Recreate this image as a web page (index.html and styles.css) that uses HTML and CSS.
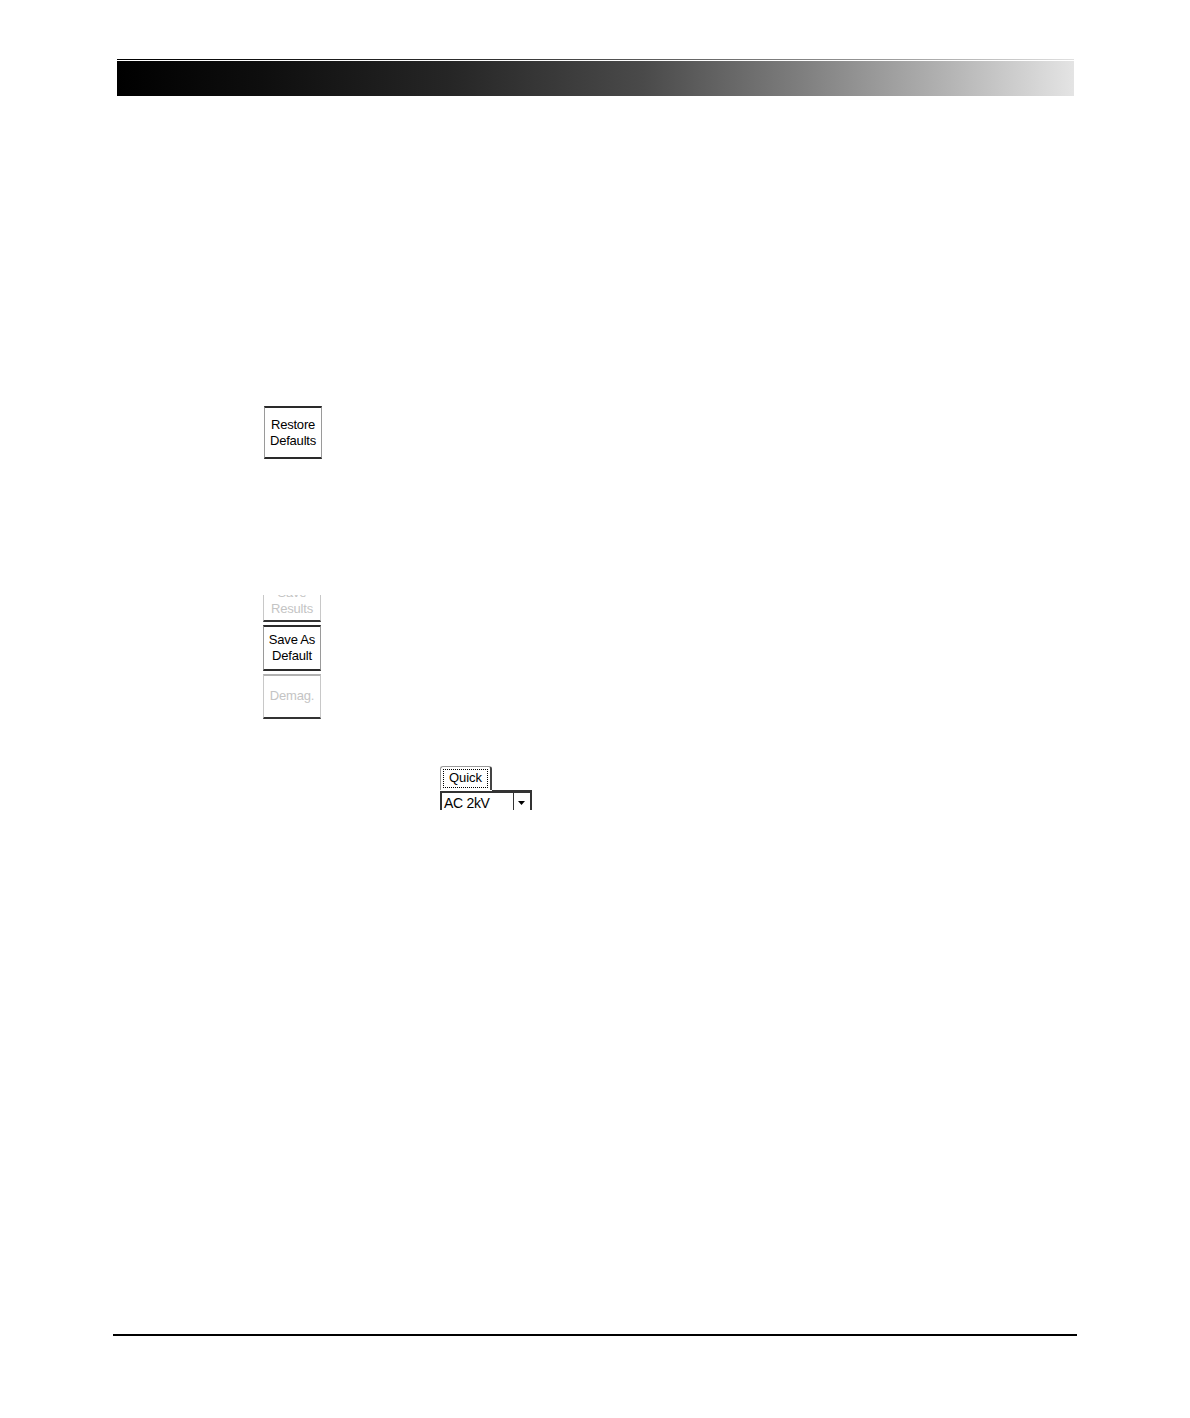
FILE: index.html
```html
<!DOCTYPE html>
<html>
<head>
<meta charset="utf-8">
<link rel="stylesheet" href="styles.css">
</head>
<body>
<div class="page">
  <header class="header">
    <div class="rule"></div>
    <div class="bar"></div>
  </header>

  <div class="btn restore">Restore<br>Defaults</div>

  <div class="stack">
    <div class="clip">
      <div class="btn disabled tall">Save<br>Results</div>
    </div>
    <div class="btn save">Save As<br>Default</div>
    <div class="btn disabled demag">Demag.</div>
  </div>

  <div class="tabarea">
    <div class="tabrow">
      <div class="tab"><span class="focus">Quick</span></div>
      <div class="tabline"></div>
    </div>
    <div class="combo">
      <span class="combo-text">AC 2kV</span>
      <span class="combo-btn"><svg width="8" height="5" viewBox="0 0 8 5"><path d="M0 0H7L3.5 4Z" fill="#000"/></svg></span>
    </div>
  </div>

  <footer class="footer"></footer>
</div>
</body>
</html>
```

FILE: styles.css
```css
html, body {
  margin: 0;
  padding: 0;
  background: #fff;
}
.page {
  width: 1190px;
  height: 1418px;
  overflow: hidden;
  font-family: "Liberation Sans", Arial, sans-serif;
  display: flow-root;
}
.header {
  margin: 59px 0 0 117px;
  width: 957px;
}
.rule {
  height: 1px;
  margin-bottom: 1px;
  background: linear-gradient(to right, #000 0%, #333 40%, #999 80%, #e0e0e0 100%);
}
.bar {
  height: 35px;
  background: linear-gradient(to right, #000 0%, #0e0e0e 15%, #262626 35%, #4a4a4a 55%, #808080 72%, #b4b4b4 87%, #e4e4e4 100%);
}
.btn {
  box-sizing: border-box;
  width: 58px;
  border-top: 2px solid #2a2a2a;
  border-bottom: 2px solid #2a2a2a;
  border-left: 1px solid #9a9a9a;
  border-right: 1px solid #9a9a9a;
  background: #fff;
  font-size: 13px;
  line-height: 16px;
  color: #000;
  text-align: center;
  display: flex;
  align-items: center;
  justify-content: center;
  letter-spacing: -0.2px;
}
.restore {
  margin: 310px 0 0 264px;
  height: 53px;
}
.stack {
  margin: 136px 0 0 263px;
  display: flex;
  flex-direction: column;
  gap: 3px;
  width: 58px;
}
.clip {
  height: 27px;
  overflow: hidden;
  display: flex;
  flex-direction: column;
  justify-content: flex-end;
}
.tall {
  height: 46px;
  flex: none;
  padding-top: 3px;
}
.disabled {
  color: #c4c4c4;
  border-top-color: #b0b0b0;
  border-bottom-color: #333;
  border-left-color: #c8c8c8;
  border-right-color: #c8c8c8;
}
.save {
  height: 46px;
}
.demag {
  height: 45px;
  padding-bottom: 1px;
}
.tabarea {
  margin: 47px 0 0 440px;
  width: 92px;
}
.tabrow {
  display: flex;
  align-items: flex-end;
}
.tab {
  box-sizing: border-box;
  width: 52px;
  height: 24px;
  border: 1px solid #9a9a9a;
  border-bottom: none;
  border-right: 2px solid #444;
  border-top-left-radius: 3px;
  border-top-right-radius: 3px;
  padding: 2px 2px 0 2px;
  font-size: 13px;
  line-height: 16px;
}
.focus {
  display: block;
  border: 1px dotted #000;
  text-align: center;
  padding: 0 0 1px 0;
}
.tabline {
  flex: 1;
  height: 1px;
  background: #333;
  margin-bottom: -1px;
}
.combo {
  margin-top: 1px;
  height: 19px;
  box-sizing: border-box;
  border-left: 2px solid #333;
  border-top: 2px solid #333;
  display: flex;
  overflow: hidden;
}
.combo-text {
  flex: 1;
  font-size: 14px;
  line-height: 16px;
  padding: 2px 0 0 2px;
  letter-spacing: -0.3px;
}
.combo-btn {
  box-sizing: border-box;
  width: 19px;
  border-left: 1px solid #333;
  border-right: 2px solid #333;
  display: flex;
  align-items: center;
  justify-content: center;
  padding-top: 3px;
}
.footer {
  margin: 524px 0 0 113px;
  width: 964px;
  height: 2px;
  background: #000;
}
```
